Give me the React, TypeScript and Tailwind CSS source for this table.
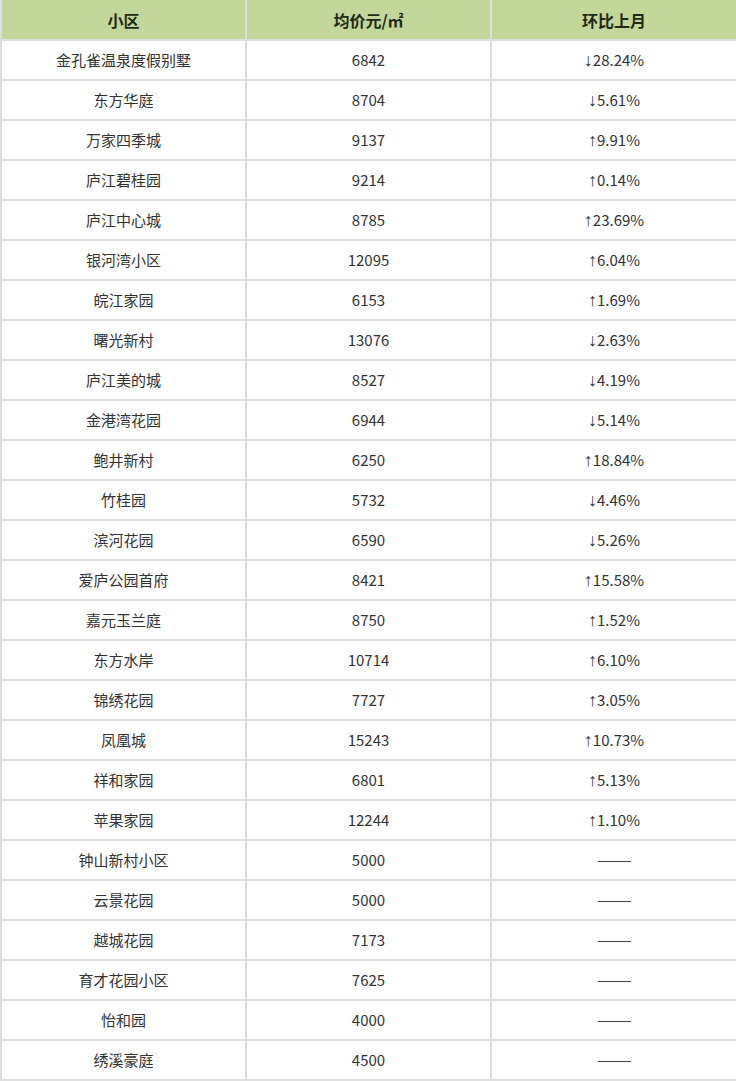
import React from 'react';

type Row = { name: string; price: string; change: string };

const rows: Row[] = [
    { name: '金孔雀温泉度假别墅', price: '6842', change: '↓28.24%' },
    { name: '东方华庭', price: '8704', change: '↓5.61%' },
    { name: '万家四季城', price: '9137', change: '↑9.91%' },
    { name: '庐江碧桂园', price: '9214', change: '↑0.14%' },
    { name: '庐江中心城', price: '8785', change: '↑23.69%' },
    { name: '银河湾小区', price: '12095', change: '↑6.04%' },
    { name: '皖江家园', price: '6153', change: '↑1.69%' },
    { name: '曙光新村', price: '13076', change: '↓2.63%' },
    { name: '庐江美的城', price: '8527', change: '↓4.19%' },
    { name: '金港湾花园', price: '6944', change: '↓5.14%' },
    { name: '鲍井新村', price: '6250', change: '↑18.84%' },
    { name: '竹桂园', price: '5732', change: '↓4.46%' },
    { name: '滨河花园', price: '6590', change: '↓5.26%' },
    { name: '爱庐公园首府', price: '8421', change: '↑15.58%' },
    { name: '嘉元玉兰庭', price: '8750', change: '↑1.52%' },
    { name: '东方水岸', price: '10714', change: '↑6.10%' },
    { name: '锦绣花园', price: '7727', change: '↑3.05%' },
    { name: '凤凰城', price: '15243', change: '↑10.73%' },
    { name: '祥和家园', price: '6801', change: '↑5.13%' },
    { name: '苹果家园', price: '12244', change: '↑1.10%' },
    { name: '钟山新村小区', price: '5000', change: '' },
    { name: '云景花园', price: '5000', change: '' },
    { name: '越城花园', price: '7173', change: '' },
    { name: '育才花园小区', price: '7625', change: '' },
    { name: '怡和园', price: '4000', change: '' },
    { name: '绣溪豪庭', price: '4500', change: '' },
];

const cell = 'border-2 border-[#dedede] text-center align-middle p-0';

export default function App() {
    return (
        <div className="w-[736px] bg-white font-['Noto_Sans_CJK_SC',sans-serif] text-[#333]">
            <table className="w-full table-fixed border-collapse">
                <colgroup>
                    <col className="w-[245px]" />
                    <col className="w-[245px]" />
                    <col className="w-[246px]" />
                </colgroup>
                <thead>
                    <tr className="h-[40px] bg-[#c4d79b] text-[16px] font-bold text-[#1f2a16]">
                        <th className={`${cell} border-t-0`}>小区</th>
                        <th className={`${cell} border-t-0`}>均价元/㎡</th>
                        <th className={`${cell} border-t-0`}>环比上月</th>
                    </tr>
                </thead>
                <tbody className="text-[15px]">
                    {rows.map((r) => (
                        <tr key={r.name} className="h-[40px]">
                            <td className={cell}>{r.name}</td>
                            <td className={cell}>{r.price}</td>
                            <td className={cell}>
                                {r.change ? (
                                    <span>
                                        <span className="font-['Liberation_Sans',sans-serif] text-[18px] leading-none">{r.change.slice(0, 1)}</span>
                                        {r.change.slice(1)}
                                    </span>
                                ) : (
                                    <span className="inline-block w-[33px] h-px bg-[#444] align-middle" />
                                )}
                            </td>
                        </tr>
                    ))}
                </tbody>
            </table>
        </div>
    );
}
